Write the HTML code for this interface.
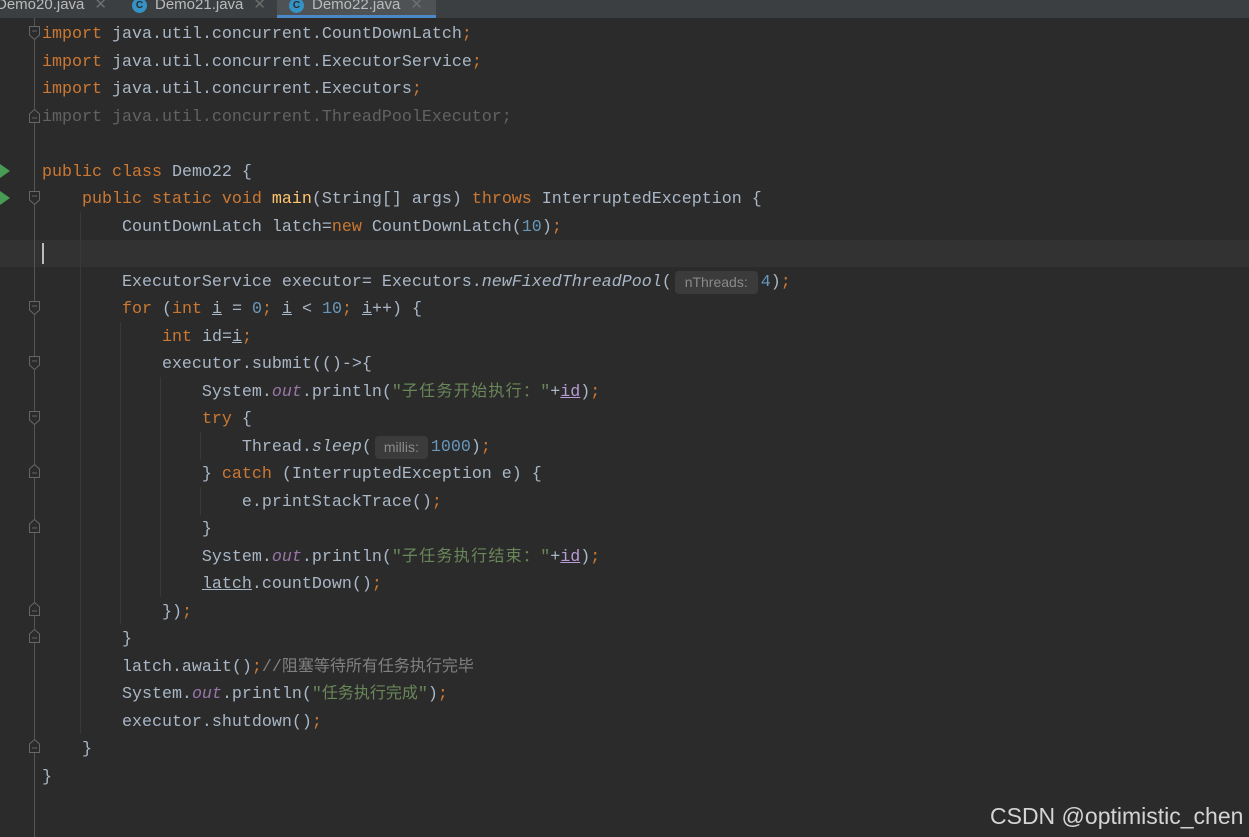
<!DOCTYPE html>
<html><head><meta charset="utf-8"><style>
body{margin:0;width:1249px;height:837px;background:#2b2b2b;overflow:hidden;position:relative;font-family:"Liberation Mono","Noto Sans CJK SC",monospace;}
.tabs{position:absolute;left:0;top:0;width:1249px;height:18px;background:#3c3f41;}
.tab{position:absolute;top:-6px;height:24px;font:15px "Liberation Sans",sans-serif;color:#bbbbbb;line-height:22px;white-space:nowrap}
.ic{display:inline-block;width:15px;height:15px;border-radius:50%;background:#3592c4;color:#2b2b2b;font:bold 10px "Liberation Sans";text-align:center;line-height:15px;vertical-align:1px;margin-right:8px}
.x{color:#6e6e6e;margin-left:10px}
.act{background:#4e5254;}
.ul{position:absolute;left:277px;top:15px;width:159px;height:3px;background:#4a88c7}
.gl{position:absolute;left:34px;top:18px;width:1px;height:819px;background:#555}
.hl{position:absolute;left:0;top:240px;width:1249px;height:27px;background:#323232}
.cur{position:absolute;left:42px;top:243px;width:2px;height:21px;background:#bbb}
.ig{position:absolute;width:1px;background:#393939}
.ln{position:absolute;left:42px;height:27.5px;line-height:27.5px;font-size:16.67px;color:#a9b7c6;white-space:pre}
.k{color:#cc7832}.n{color:#6897bb}.s{color:#6a8759}.f{color:#9876aa;font-style:italic}.m{color:#ffc66d}.c{color:#808080}.g{color:#626262}.it{font-style:italic}
.u{text-decoration:underline}.p{color:#b89ad6;text-decoration:underline}
.cj{font-family:"Noto Sans CJK SC",sans-serif;font-size:16px;line-height:0}
.cw{letter-spacing:1.3px}
.h{display:inline-block;height:23px;line-height:23px;background:#3b3b3b;color:#8a8a8a;border-radius:4px;font-size:14px;font-family:"Liberation Sans",sans-serif;text-align:center;vertical-align:top;margin:2px 3px 0 3px}
.run{position:absolute;left:0;width:0;height:0;border-top:7px solid transparent;border-bottom:7px solid transparent;border-left:10px solid #499c54}
.fm{position:absolute;left:29px;width:11px;height:14px}
.wm{position:absolute;left:990px;top:803px;font:23px "Liberation Sans",sans-serif;color:#d4d4d4}
</style></head><body>
<div class="tabs">
<div class="tab" style="left:-4px;width:120px">Demo20.java<span class="x">✕</span></div>
<div class="tab" style="left:132px;width:140px"><span class="ic">C</span>Demo21.java<span class="x">✕</span></div>
<div class="tab act" style="left:277px;width:159px;padding-left:12px;box-sizing:border-box"><span class="ic">C</span>Demo22.java<span class="x">✕</span></div>
<div class="ul"></div>
</div>
<div class="hl"></div>
<div class="gl"></div>
<div class="ig" style="left:80px;top:212px;height:522px"></div>
<div class="ig" style="left:120px;top:322px;height:302px"></div>
<div class="ig" style="left:160px;top:377px;height:220px"></div>
<div class="ig" style="left:200px;top:432px;height:28px"></div>
<div class="ig" style="left:200px;top:487px;height:28px"></div>
<div class="cur"></div>
<div class="run" style="top:164px"></div>
<div class="run" style="top:191px"></div>
<svg class="fm" style="top:26px" viewBox="0 0 11 14"><path d="M0.5 0.5H10.5V9L5.5 13.5L0.5 9Z M3 5H8" fill="#2b2b2b" stroke="#666"/></svg>
<svg class="fm" style="top:109px" viewBox="0 0 11 14"><path d="M0.5 13.5H10.5V5L5.5 0.5L0.5 5Z M3 9H8" fill="#2b2b2b" stroke="#666"/></svg>
<svg class="fm" style="top:191px" viewBox="0 0 11 14"><path d="M0.5 0.5H10.5V9L5.5 13.5L0.5 9Z M3 5H8" fill="#2b2b2b" stroke="#666"/></svg>
<svg class="fm" style="top:301px" viewBox="0 0 11 14"><path d="M0.5 0.5H10.5V9L5.5 13.5L0.5 9Z M3 5H8" fill="#2b2b2b" stroke="#666"/></svg>
<svg class="fm" style="top:356px" viewBox="0 0 11 14"><path d="M0.5 0.5H10.5V9L5.5 13.5L0.5 9Z M3 5H8" fill="#2b2b2b" stroke="#666"/></svg>
<svg class="fm" style="top:411px" viewBox="0 0 11 14"><path d="M0.5 0.5H10.5V9L5.5 13.5L0.5 9Z M3 5H8" fill="#2b2b2b" stroke="#666"/></svg>
<svg class="fm" style="top:464px" viewBox="0 0 11 14"><path d="M0.5 13.5H10.5V5L5.5 0.5L0.5 5Z M3 9H8" fill="#2b2b2b" stroke="#666"/></svg>
<svg class="fm" style="top:519px" viewBox="0 0 11 14"><path d="M0.5 13.5H10.5V5L5.5 0.5L0.5 5Z M3 9H8" fill="#2b2b2b" stroke="#666"/></svg>
<svg class="fm" style="top:602px" viewBox="0 0 11 14"><path d="M0.5 13.5H10.5V5L5.5 0.5L0.5 5Z M3 9H8" fill="#2b2b2b" stroke="#666"/></svg>
<svg class="fm" style="top:629px" viewBox="0 0 11 14"><path d="M0.5 13.5H10.5V5L5.5 0.5L0.5 5Z M3 9H8" fill="#2b2b2b" stroke="#666"/></svg>
<svg class="fm" style="top:739px" viewBox="0 0 11 14"><path d="M0.5 13.5H10.5V5L5.5 0.5L0.5 5Z M3 9H8" fill="#2b2b2b" stroke="#666"/></svg>

<div class="ln" style="top:21px"><span class="k">import</span> java.util.concurrent.CountDownLatch<span class="k">;</span></div>
<div class="ln" style="top:48.5px"><span class="k">import</span> java.util.concurrent.ExecutorService<span class="k">;</span></div>
<div class="ln" style="top:76px"><span class="k">import</span> java.util.concurrent.Executors<span class="k">;</span></div>
<div class="ln g" style="top:103.5px">import java.util.concurrent.ThreadPoolExecutor;</div>
<div class="ln" style="top:158.5px"><span class="k">public class</span> Demo22 {</div>
<div class="ln" style="top:186px">    <span class="k">public static void</span> <span class="m">main</span>(String[] args) <span class="k">throws</span> InterruptedException {</div>
<div class="ln" style="top:213.5px">        CountDownLatch latch=<span class="k">new</span> CountDownLatch(<span class="n">10</span>)<span class="k">;</span></div>
<div class="ln" style="top:268.5px">        ExecutorService executor= Executors.<span class="it">newFixedThreadPool</span>(<span class="h" style="width:83px">nThreads:</span><span class="n">4</span>)<span class="k">;</span></div>
<div class="ln" style="top:296px">        <span class="k">for</span> (<span class="k">int</span> <span class="u">i</span> = <span class="n">0</span><span class="k">;</span> <span class="u">i</span> &lt; <span class="n">10</span><span class="k">;</span> <span class="u">i</span>++) {</div>
<div class="ln" style="top:323.5px">            <span class="k">int</span> id=<span class="u">i</span><span class="k">;</span></div>
<div class="ln" style="top:351px">            executor.submit(()-&gt;{</div>
<div class="ln" style="top:378.5px">                System.<span class="f">out</span>.println(<span class="s">"<span class="cj cw">子任务开始执行：</span>"</span>+<span class="p">id</span>)<span class="k">;</span></div>
<div class="ln" style="top:406px">                <span class="k">try</span> {</div>
<div class="ln" style="top:433.5px">                    Thread.<span class="it">sleep</span>(<span class="h" style="width:53px">millis:</span><span class="n">1000</span>)<span class="k">;</span></div>
<div class="ln" style="top:461px">                } <span class="k">catch</span> (InterruptedException e) {</div>
<div class="ln" style="top:488.5px">                    e.printStackTrace()<span class="k">;</span></div>
<div class="ln" style="top:516px">                }</div>
<div class="ln" style="top:543.5px">                System.<span class="f">out</span>.println(<span class="s">"<span class="cj cw">子任务执行结束：</span>"</span>+<span class="p">id</span>)<span class="k">;</span></div>
<div class="ln" style="top:571px">                <span class="u">latch</span>.countDown()<span class="k">;</span></div>
<div class="ln" style="top:598.5px">            })<span class="k">;</span></div>
<div class="ln" style="top:626px">        }</div>
<div class="ln" style="top:653.5px">        latch.await()<span class="k">;</span><span class="c">//<span class="cj">阻塞等待所有任务执行完毕</span></span></div>
<div class="ln" style="top:681px">        System.<span class="f">out</span>.println(<span class="s">"<span class="cj">任务执行完成</span>"</span>)<span class="k">;</span></div>
<div class="ln" style="top:708.5px">        executor.shutdown()<span class="k">;</span></div>
<div class="ln" style="top:736px">    }</div>
<div class="ln" style="top:763.5px">}</div>
<div class="wm">CSDN @optimistic_chen</div>
</body></html>
